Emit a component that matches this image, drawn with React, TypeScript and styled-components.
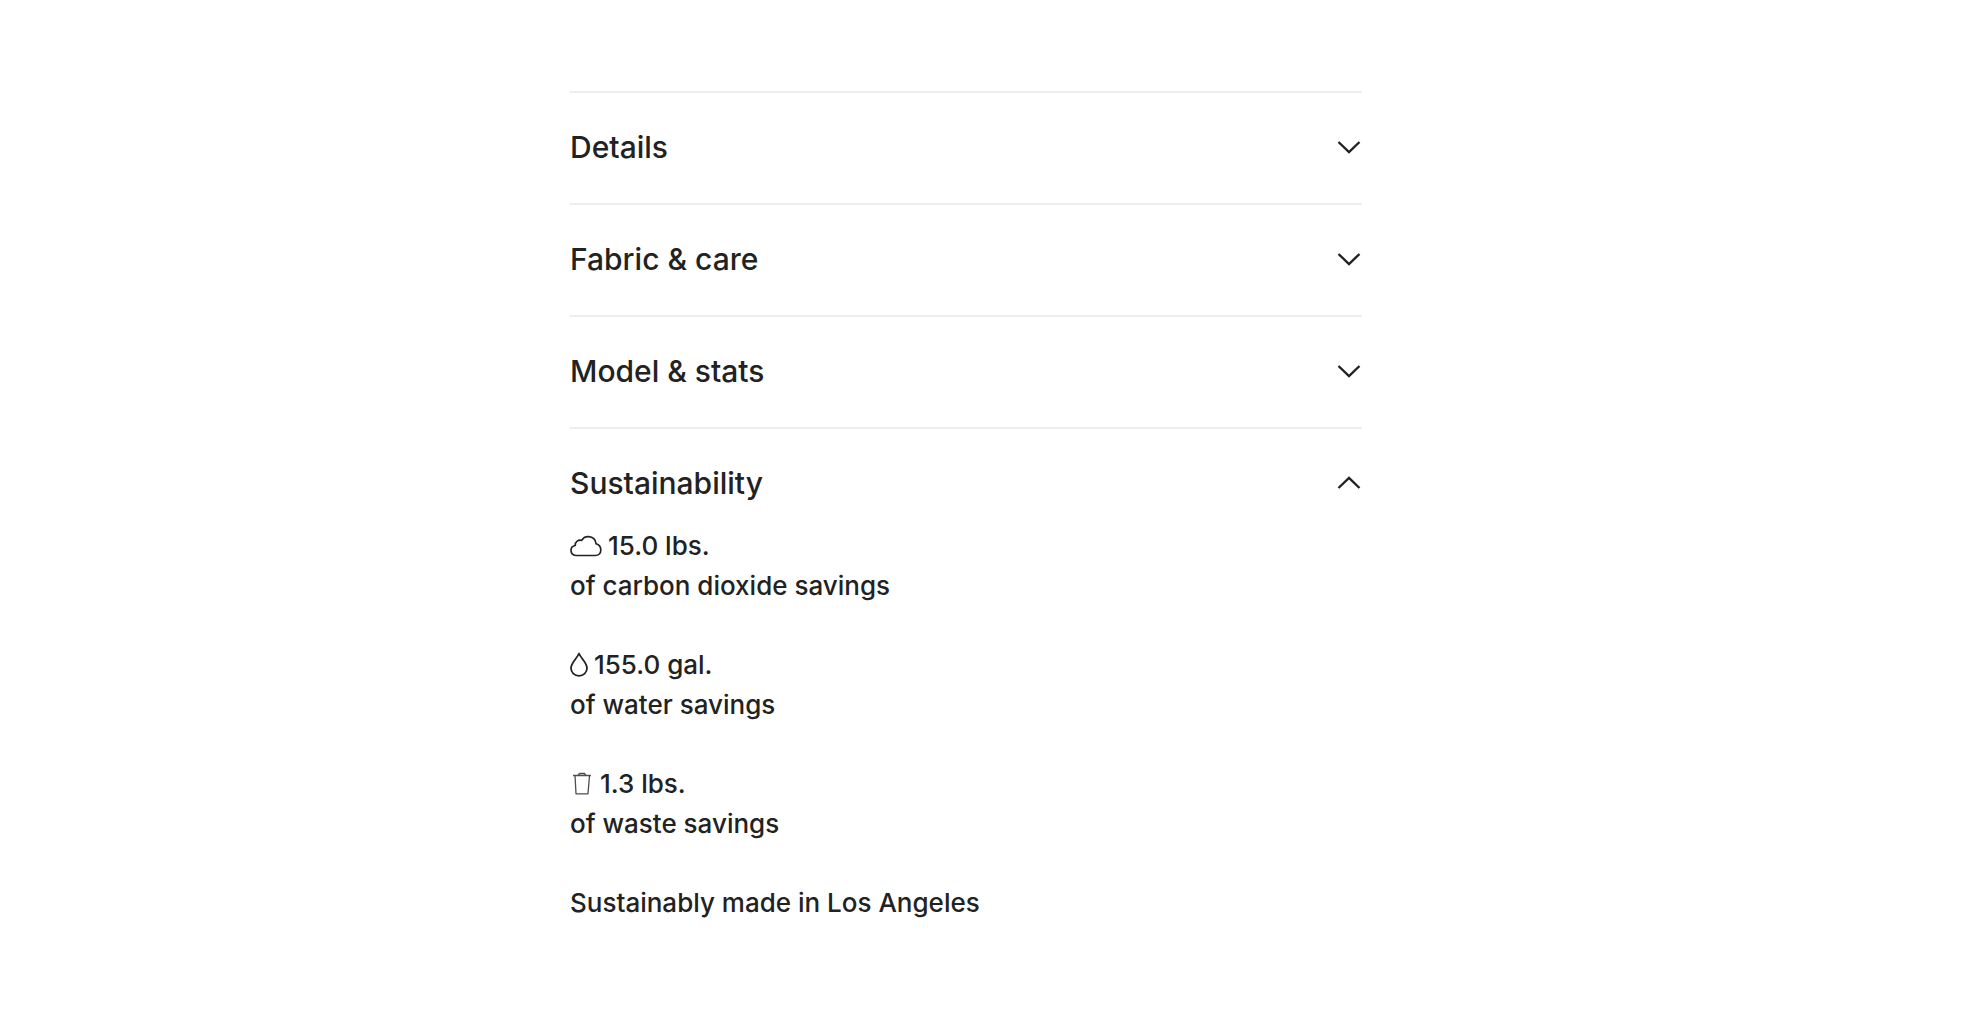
import React, { useId, useState } from "react";
import styled, { createGlobalStyle } from "styled-components";

const GlobalStyle = createGlobalStyle`
  *, *::before, *::after { box-sizing: border-box; }
  body {
    margin: 0;
    background: #fff;
    color: #222;
    font-family: Inter, "Liberation Sans", sans-serif;
  }
`;

const Page = styled.main`
  display: grid;
  grid-template-columns: 95fr minmax(320px, 132fr) 103fr;
  padding: 91px 0 80px;
`;

const Accordion = styled.div`
  grid-column: 2;
`;

const Item = styled.section`
  border-top: 2px solid #eee;
`;

const Heading = styled.h2`
  margin: 0;
`;

const Toggle = styled.button<{ $open: boolean }>`
  display: flex;
  align-items: center;
  justify-content: space-between;
  width: 100%;
  padding: ${(p) => (p.$open ? "34px 0 23px" : "34px 0 36px")};
  border: 0;
  background: none;
  color: inherit;
  font: inherit;
  font-size: 30px;
  font-weight: 500;
  line-height: 40px;
  text-align: left;
  cursor: pointer;
`;

const Chevron = styled.svg<{ $open: boolean }>`
  width: 26px;
  height: 14px;
  transform: ${(p) => (p.$open ? "rotate(180deg)" : "none")};
`;

const Panel = styled.div`
  display: grid;
  gap: 39px;
  font-size: 26px;
  font-weight: 500;
  line-height: 40px;

  &[hidden] {
    display: none;
  }
`;

const Savings = styled.ul`
  display: grid;
  gap: 39px;
  margin: 0;
  padding: 0;
  list-style: none;
`;

const Amount = styled.div`
  display: flex;
  align-items: center;
  gap: 6px;
`;

const Text = styled.p`
  margin: 0;
`;

const Icon = styled.svg`
  flex: none;
  fill: none;
  stroke: currentColor;
  stroke-linejoin: round;
`;

const CloudIcon = () => (
  <Icon width="32" height="24" viewBox="0 0 32 24" strokeWidth="1.7" aria-hidden="true">
    <path d="M6.5 21.5C3 21.5 1 19.4 1 16.5C1 13.8 2.8 11.9 5.2 11.5C5 7.8 8.5 5.4 11.7 6.4C13.2 3.7 15.8 2.4 18.6 2.6C22.8 2.9 25.6 5.7 26.1 9.8C29 10.7 30.8 13 30.8 15.9C30.8 19.2 28.6 21.5 25.2 21.5Z" />
  </Icon>
);

const DropIcon = () => (
  <Icon width="18" height="26" viewBox="0 0 18 26" strokeWidth="1.8" aria-hidden="true">
    <path d="M9 1.5C7 6.5 1 10.5 1 16C1 20.6 4.500 23.800 9 23.800C13.500 23.800 17 20.6 17 16C17 10.5 11 6.5 9 1.5Z" />
  </Icon>
);

const TrashIcon = () => (
  <Icon width="24" height="26" viewBox="0 0 24 26" strokeWidth="1.3" strokeOpacity="0.8" aria-hidden="true">
    <path d="M3 4.500H21M8 4.500L9.500 2.500H14.500L16 4.500M5 4.500L6 22.800H18L19.500 4.500" />
  </Icon>
);

const savings = [
  { icon: <CloudIcon />, amount: "15.0 lbs.", label: "of carbon dioxide savings" },
  { icon: <DropIcon />, amount: "155.0 gal.", label: "of water savings" },
  { icon: <TrashIcon />, amount: "1.3 lbs.", label: "of waste savings" },
];

interface SectionProps {
  title: string;
  defaultOpen?: boolean;
  children?: React.ReactNode;
}

function Section({ title, defaultOpen = false, children }: SectionProps) {
  const [open, setOpen] = useState(defaultOpen);
  const id = useId();
  return (
    <Item>
      <Heading>
        <Toggle
          type="button"
          $open={open}
          aria-expanded={open}
          aria-controls={id}
          onClick={() => setOpen(!open)}
        >
          {title}
          <Chevron
            $open={open}
            viewBox="0 0 26 14"
            fill="none"
            stroke="currentColor"
            strokeWidth="2.4"
            aria-hidden="true"
          >
            <path d="M2.5 2 13 12 23.5 2" />
          </Chevron>
        </Toggle>
      </Heading>
      <Panel id={id} hidden={!open}>
        {children}
      </Panel>
    </Item>
  );
}

export default function App() {
  return (
    <Page>
      <GlobalStyle />
      <Accordion>
        <Section title="Details" />
        <Section title="Fabric & care" />
        <Section title="Model & stats" />
        <Section title="Sustainability" defaultOpen>
          <Savings>
            {savings.map((s) => (
              <li key={s.label}>
                <Amount>
                  {s.icon}
                  {s.amount}
                </Amount>
                <Text>{s.label}</Text>
              </li>
            ))}
          </Savings>
          <Text>Sustainably made in Los Angeles</Text>
        </Section>
      </Accordion>
    </Page>
  );
}
